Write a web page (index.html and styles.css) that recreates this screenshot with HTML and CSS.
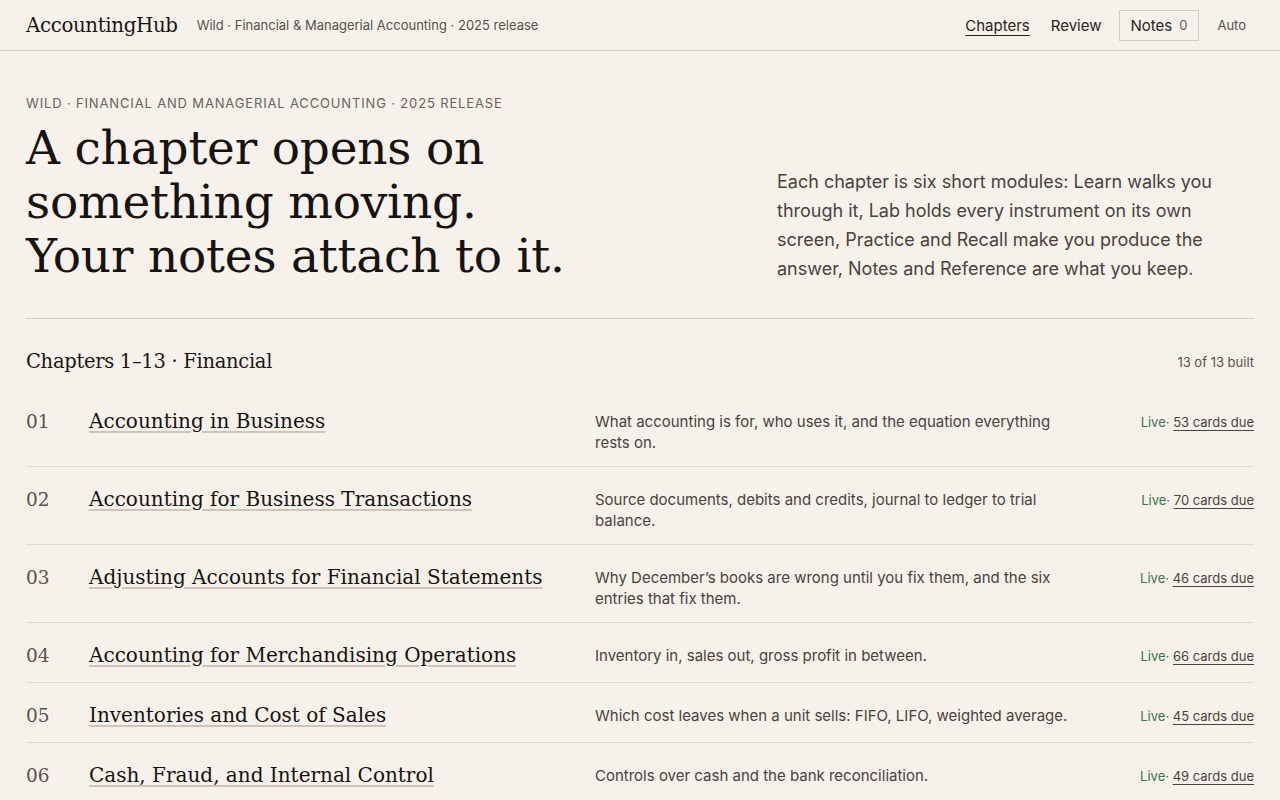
FILE: index.html
```html
<!DOCTYPE html>
<html lang="en">
<head>
  <meta charset="UTF-8">
  <title>AccountingHub - Chapters</title>
  <meta name="viewport" content="width=device-width, initial-scale=1.0">
  <link rel="stylesheet" href="styles.css">
</head>
<body>

  <!-- Top bar -->
  <header class="topbar">
    <div class="brand">
      <a class="logo" href="#">AccountingHub</a>
      <span class="edition">Wild · Financial &amp; Managerial Accounting · 2025 release</span>
    </div>
    <nav class="nav">
      <a href="#" class="nav-link current">Chapters</a>
      <a href="#" class="nav-link">Review</a>
      <button class="notes-btn">Notes <span class="count">0</span></button>
      <button class="theme-btn">Auto</button>
    </nav>
  </header>

  <main class="page">
    <!-- Intro -->
    <section class="intro">
      <div>
        <p class="eyebrow">Wild · Financial and Managerial Accounting · 2025 release</p>
        <h1>
          <span>A chapter opens on</span>
          <span>something moving.</span>
          <span>Your notes attach to it.</span>
        </h1>
      </div>
      <p class="lede">Each chapter is six short modules: Learn walks you through it, Lab holds every instrument on its own screen, Practice and Recall make you produce the answer, Notes and Reference are what you keep.</p>
    </section>

    <!-- Chapter list -->
    <section class="chapters">
      <div class="chapters-head">
        <h2>Chapters 1–13 · Financial</h2>
        <span class="built">13 of 13 built</span>
      </div>
      <ol class="chapter-list" id="chapterList"></ol>
    </section>
  </main>

  <script>
    const chapters = [
      ["Accounting in Business", "What accounting is for, who uses it, and the equation everything rests on.", 53],
      ["Accounting for Business Transactions", "Source documents, debits and credits, journal to ledger to trial balance.", 70],
      ["Adjusting Accounts for Financial Statements", "Why December’s books are wrong until you fix them, and the six entries that fix them.", 46],
      ["Accounting for Merchandising Operations", "Inventory in, sales out, gross profit in between.", 66],
      ["Inventories and Cost of Sales", "Which cost leaves when a unit sells: FIFO, LIFO, weighted average.", 45],
      ["Cash, Fraud, and Internal Control", "Controls over cash and the bank reconciliation.", 49],
      ["Accounts and Notes Receivable", "Selling on credit, estimating what won’t be collected, and notes that earn interest.", 38],
      ["Accounting for Long-Term Assets", "Buying, depreciating and disposing of plant assets, plus intangibles.", 57]
    ];

    const list = document.getElementById("chapterList");

    chapters.forEach((ch, index) => {
      const num = String(index + 1).padStart(2, "0");
      const row = document.createElement("li");
      row.className = "chapter";
      row.innerHTML = `
        <span class="num">${num}</span>
        <a href="#" class="title">${ch[0]}</a>
        <p class="desc">${ch[1]}</p>
        <span class="status"><span class="live">Live·</span> <a href="#" class="due">${ch[2]} cards due</a></span>
      `;
      list.appendChild(row);
    });
  </script>

</body>
</html>
```

FILE: styles.css
```css
* {
  box-sizing: border-box;
}
body {
  background-color: #f6f1eb;
  color: #1f1b17;
  font-family: Inter, "Noto Sans", sans-serif;
  margin: 0;
  padding: 0;
}
a {
  color: inherit;
  text-decoration: none;
}
button {
  font-family: inherit;
  background: none;
  cursor: pointer;
}

/* Top bar */
.topbar {
  display: flex;
  justify-content: space-between;
  align-items: center;
  height: 51px;
  padding: 0 26px;
  border-bottom: 1px solid #d9cfc4;
}
.brand {
  display: flex;
  align-items: center;
  gap: 19px;
}
.logo {
  font-family: "DejaVu Serif", serif;
  font-size: 19.8px;
  letter-spacing: -0.35px;
  color: #1a1613;
}
.edition {
  font-size: 13px;
  color: #59514a;
}
.nav {
  display: flex;
  align-items: center;
  gap: 17px;
}
.nav-link {
  font-size: 15px;
  color: #2a2520;
}
.nav-link.current {
  margin-right: 4px;
  text-decoration: underline;
  text-decoration-thickness: 1px;
  text-underline-offset: 4px;
}
.notes-btn {
  display: flex;
  align-items: center;
  font-size: 15px;
  color: #2a2520;
  border: 1px solid #d6ccc0;
  padding: 0 11px;
  height: 31px;
}
.notes-btn .count {
  font-size: 13px;
  color: #6b625a;
  margin-left: 7px;
}
.theme-btn {
  font-size: 13px;
  color: #59514a;
  border: none;
  padding: 0 8px 0 0;
  margin-left: 1px;
}

/* Intro */
.page {
  padding: 0 26px;
}
.intro {
  display: grid;
  grid-template-columns: minmax(0, 1fr) 477px;
  align-items: end;
  padding: 44px 0 35px;
  border-bottom: 1px solid #d6ccc0;
}
.eyebrow {
  margin: 0 0 10px;
  font-size: 13px;
  letter-spacing: 0.065em;
  text-transform: uppercase;
  color: #6b625a;
}
h1 {
  margin: 0;
  font-family: "DejaVu Serif", serif;
  font-weight: normal;
  font-size: 47px;
  line-height: 54px;
  letter-spacing: -0.2px;
  color: #17130f;
}
h1 span {
  display: block;
  white-space: nowrap;
}
.lede {
  margin: 0;
  max-width: 450px;
  font-size: 18px;
  line-height: 29px;
  color: #4a433d;
}

/* Chapters */
.chapters-head {
  display: flex;
  justify-content: space-between;
  align-items: center;
  padding: 31px 0 16px;
}
h2 {
  margin: 0;
  font-family: "DejaVu Serif", serif;
  font-weight: normal;
  font-size: 19.5px;
  letter-spacing: -0.3px;
  color: #1a1613;
}
.built {
  font-size: 13px;
  color: #59514a;
}
.chapter-list {
  list-style: none;
  margin: 0;
  padding: 0;
}
.chapter {
  display: grid;
  grid-template-columns: 63px 506px 480px 1fr;
  align-items: start;
  padding: 19px 0 13px;
  border-bottom: 1px solid #e4dbd0;
}
.num {
  font-family: "DejaVu Serif", serif;
  font-size: 18.5px;
  line-height: 27px;
  color: #5a524b;
}
.title {
  justify-self: start;
  font-family: "DejaVu Serif", serif;
  font-size: 20px;
  line-height: 27px;
  color: #17130f;
  text-decoration: underline;
  text-decoration-color: #cfc4b6;
  text-decoration-thickness: 2px;
  text-underline-offset: 3px;
}
.desc {
  margin: 3px 0 0;
  font-size: 15px;
  line-height: 21px;
  color: #4a433d;
}
.status {
  justify-self: end;
  margin-top: 6px;
  font-size: 13px;
  color: #4a433d;
}
.live {
  color: #3b7550;
}
.due {
  text-decoration: underline;
  text-underline-offset: 3px;
}
```
